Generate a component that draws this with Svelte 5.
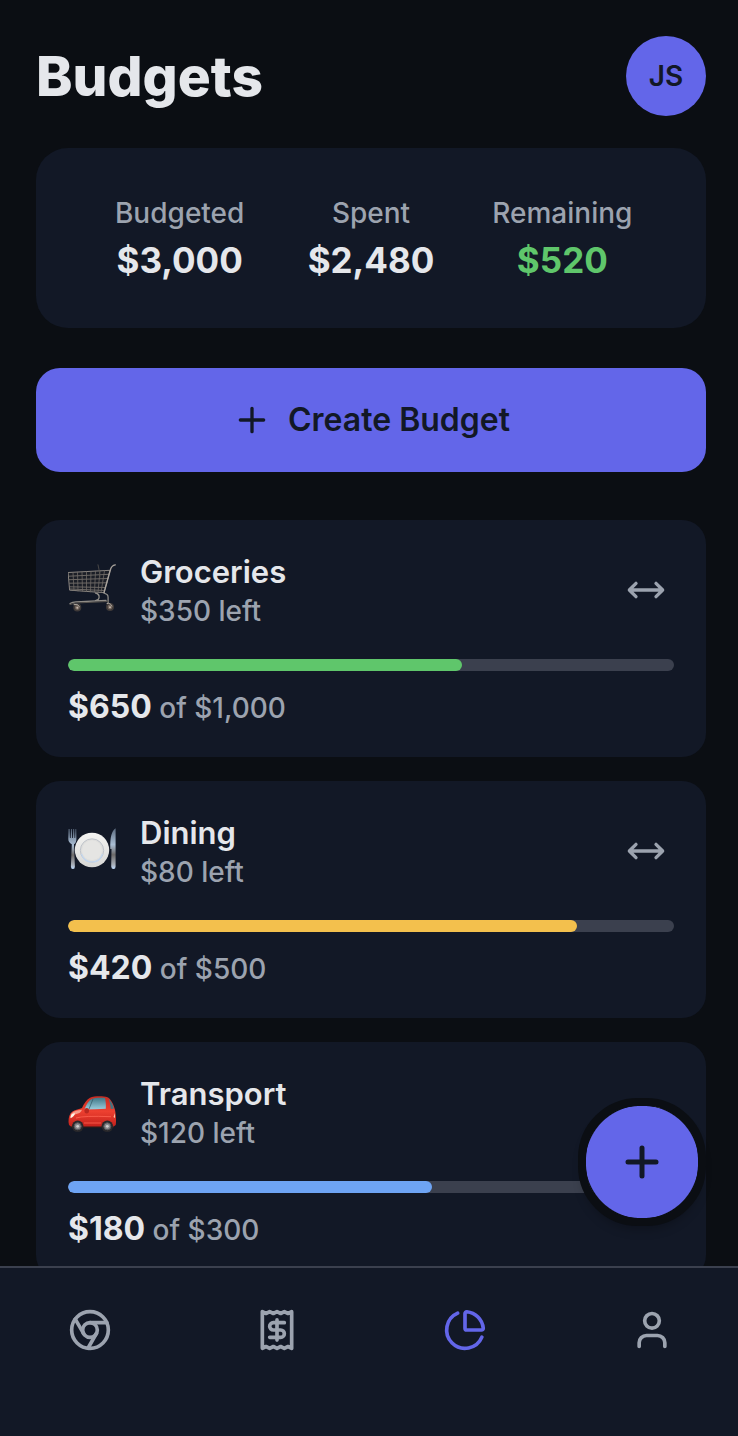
<script>
  const totals = [
    { label: 'Budgeted', value: '$3,000' },
    { label: 'Spent', value: '$2,480' },
    { label: 'Remaining', value: '$520', positive: true }
  ];

  const budgets = [
    { icon: 'cart', name: 'Groceries', left: '$350', spent: '$650', limit: '$1,000', percent: 65, tone: 'green' },
    { icon: 'plate', name: 'Dining', left: '$80', spent: '$420', limit: '$500', percent: 84, tone: 'amber' },
    { icon: 'car', name: 'Transport', left: '$120', spent: '$180', limit: '$300', percent: 60, tone: 'blue' }
  ];

  const tabs = ['Overview', 'Transactions', 'Budgets', 'Profile'];
  let active = $state('Budgets');
</script>

{#snippet plus()}
  <path d="M5 12h14M12 5v14" />
{/snippet}

{#snippet cart()}
  <svg class="picture" viewBox="0 0 48 48" fill="none" stroke-linecap="round" stroke-linejoin="round" aria-hidden="true">
    <path d="M2 39.5q2.5-1.5 6-1.7L38 36.5M27.5 29q4 1 3.6 4.500-.3 2.500-3.100 3M36 29l3 1.500q1.200 1 1.100 3v6" stroke="#8f8c87" stroke-width="1.3" />
    <path d="M2 40.5l6-1.500 32-1.500" stroke="#57534f" stroke-width="1" />
    <path d="M.5 8.500 42 6.300 36 28.700 2 26.200z" fill="#1b1e26" stroke="#8a8580" stroke-width="1" />
    <path d="M1 12.200 41 10.300M1.300 15.700 40 14.500M1.600 19.200 39 18.800M1.800 22.800 37.500 23.500M2 25 36.500 26.500" stroke="#817b75" stroke-width=".8" />
    <path d="M5 8.500 6 26.500M9.500 8.200 10 27M14 8 14.500 27M18.500 7.700 18.500 27.500M23 7.500 22.500 27.800M27.500 7.200 26.500 28M32 7 30 28.300M36.500 6.800 33 28.500" stroke="#6f6a66" stroke-width=".8" />
    <path d="M30 .8 31.300 7 32 13" stroke="#57534f" stroke-width=".8" />
    <path d="M36 28.700 42.500 5.500Q43.500 1.500 47.300.8" stroke="#aaa49d" stroke-width="1.300" />
    <circle cx="9.300" cy="43.500" r="3.200" fill="#73665e" stroke="#3f3a39" stroke-width="1.600" />
    <circle cx="42" cy="43" r="3.200" fill="#73665e" stroke="#3f3a39" stroke-width="1.600" />
    <path d="M6 40.500q3.500-1.500 5.500 2M39 39.500q3.500-1 5 2.500" stroke="#aaa49d" stroke-width="1" />
    <circle cx="9.300" cy="43.700" r="1" fill="#c4b7ac" />
    <circle cx="42" cy="43.200" r="1" fill="#c4b7ac" />
  </svg>
{/snippet}

{#snippet plate()}
  <svg class="picture" viewBox="0 0 48 48" fill="none" aria-hidden="true">
    <defs>
      <linearGradient id="steel" x1="0" y1="0" x2="0" y2="1">
        <stop offset="0" stop-color="#5d6c80" />
        <stop offset=".4" stop-color="#a9bdd3" />
        <stop offset=".65" stop-color="#6d6a69" />
        <stop offset=".9" stop-color="#aab1bb" />
        <stop offset="1" stop-color="#bfdcff" />
      </linearGradient>
      <linearGradient id="china" x1="0" y1="0" x2="0" y2="1">
        <stop offset="0" stop-color="#f4f4f2" />
        <stop offset="1" stop-color="#d8d8d6" />
      </linearGradient>
    </defs>
    <path d="M.6 4h1l.3 9h.8l.3-9h.8l.4 9h.8l.3-9h.8l.4 9h.7l.3-9h.7l.2 10q0 4-2.400 5.200l.9 22.300q0 2.500-2 2.500t-2-2.500l.9-22.300Q.3 17.500.3 14z" fill="url(#steel)" />
    <path d="M47.600 3.300v38.200q0 2.500-2.100 2.500t-2.300-2.500L43.500 24h-1.200q-.7-17 5.300-20.700z" fill="url(#steel)" />
    <circle cx="24" cy="25" r="17.200" fill="url(#china)" />
    <circle cx="24" cy="25.500" r="11.700" fill="#dededc" stroke="#b6bdc5" stroke-width=".8" />
    <path d="M13.500 29q2.500 8 10.500 8t10.500-8" stroke="#c2d6ee" stroke-width="1.200" />
    <circle cx="24" cy="25.300" r="10" fill="#e5e5e3" />
  </svg>
{/snippet}

{#snippet car()}
  <svg class="picture" viewBox="0 0 48 48" fill="none" aria-hidden="true">
    <defs>
      <linearGradient id="paint" x1="0" y1="0" x2="0" y2="1">
        <stop offset="0" stop-color="#c62c22" />
        <stop offset=".5" stop-color="#ed4030" />
        <stop offset="1" stop-color="#c3211c" />
      </linearGradient>
      <linearGradient id="glass" x1="0" y1="0" x2="0" y2="1">
        <stop offset="0" stop-color="#3f7786" />
        <stop offset="1" stop-color="#9bcddd" />
      </linearGradient>
    </defs>
    <path d="M2 36h44v6H2z" fill="#241a1c" />
    <path d="M.5 36c0-5 1-8.500 4-10.500 3-1.800 7-2.400 9.500-3.500 2-4.500 4.500-8.500 8-10.300 4-1.700 13-2 17.500-.4 3.500 1.300 6.500 8.200 7.500 12.700 1 5 1.300 12 .7 15l-2 1.500H3l-2-1.500z" fill="url(#paint)" />
    <path d="M16.500 23.500c1.600-4.500 4-8.500 7-10.500 3.500-1.400 10-1.700 13.500-.9.800 3.500 1.100 7.200.8 10.700-7 .3-14 .7-21.300.7z" fill="url(#glass)" />
    <path d="M25 13 21 23" stroke="#315965" stroke-width=".7" />
    <path d="M40.500 12.700c2.500 2.200 4.500 6 5.300 9.800l-3 .5c-.3-4-1-7.400-2.300-10.300z" fill="#417582" />
    <path d="M3 28q2-3 6-3.500l5-.8q-1 3.500-6.500 4.500-3 .6-5 2.800z" fill="#f79c8b" />
    <path d="M2.500 31q.5-3.400 4.500-3.700-.4 3.200-4.500 5z" fill="#fff5e8" />
    <path d="M47 27v5l-1.500-1z" fill="#ffc2a4" />
    <ellipse cx="18.700" cy="24.700" rx="2.300" ry="2.700" fill="#b92820" />
    <path d="M16 37h17M8 32q8-2.500 35-1.300" stroke="#ff6352" stroke-width=".8" />
    <circle cx="9.700" cy="40.300" r="5.800" fill="#29282b" />
    <circle cx="9.700" cy="40.300" r="3.500" fill="#89898c" stroke="#555559" />
    <circle cx="9.700" cy="40.300" r="1.400" fill="#d0d0d0" />
    <circle cx="39.300" cy="40.300" r="5.800" fill="#29282b" />
    <circle cx="39.300" cy="40.300" r="3.500" fill="#89898c" stroke="#555559" />
    <circle cx="39.300" cy="40.300" r="1.400" fill="#d0d0d0" />
  </svg>
{/snippet}

<div class="app">
  <div class="stage">
    <main>
      <header>
        <h1>Budgets</h1>
        <button class="avatar" aria-label="Account">JS</button>
      </header>

      <dl class="summary">
        {#each totals as t}
          <div>
            <dt>{t.label}</dt>
            <dd class:positive={t.positive}>{t.value}</dd>
          </div>
        {/each}
      </dl>

      <button class="create">
        <svg class="line" viewBox="0 0 24 24" aria-hidden="true">{@render plus()}</svg>
        Create Budget
      </button>

      <section aria-label="Budgets">
        {#each budgets as b}
          <article>
            <div class="top">
              {#if b.icon === 'cart'}{@render cart()}{:else if b.icon === 'plate'}{@render plate()}{:else}{@render car()}{/if}
              <div class="names">
                <h2>{b.name}</h2>
                <p>{b.left} left</p>
              </div>
              <button class="adjust" aria-label="Adjust {b.name}">
                <svg class="line" viewBox="0 0 24 24" aria-hidden="true">
                  <path d="m18 8 4 4-4 4M2 12h20M6 8l-4 4 4 4" />
                </svg>
              </button>
            </div>
            <div class="track" role="progressbar" aria-label={b.name} aria-valuenow={b.percent} aria-valuemin="0" aria-valuemax="100">
              <div class="fill {b.tone}" style:width="{b.percent}%"></div>
            </div>
            <p class="amount"><strong>{b.spent}</strong> of {b.limit}</p>
          </article>
        {/each}
      </section>
    </main>

    <button class="fab" aria-label="Add">
      <svg class="line" viewBox="0 0 24 24" aria-hidden="true">{@render plus()}</svg>
    </button>
  </div>

  <nav>
    {#each tabs as tab}
      <button class:active={active === tab} aria-label={tab} onclick={() => (active = tab)}>
        <svg class="line" viewBox="0 0 24 24" aria-hidden="true">
          {#if tab === 'Overview'}
            <circle cx="12" cy="12" r="10" />
            <circle cx="12" cy="12" r="4" />
            <path d="M21.170 8H12M3.950 6.060 8.540 14M10.880 21.940 15.460 14" />
          {:else if tab === 'Transactions'}
            <path d="M4 2v20l2-1 2 1 2-1 2 1 2-1 2 1 2-1 2 1V2l-2 1-2-1-2 1-2-1-2 1-2-1-2 1Z" />
            <path d="M16 8h-6a2 2 0 1 0 0 4h4a2 2 0 1 1 0 4H8M12 17.500v-11" />
          {:else if tab === 'Budgets'}
            <path d="M21 12c.552 0 1.005-.449.950-.998a10 10 0 0 0-8.953-8.951c-.550-.055-.998.398-.998.950v8a1 1 0 0 0 1 1z" />
            <path d="M21.210 15.890A10 10 0 1 1 8 2.830" />
          {:else}
            <path d="M19 21v-2a4 4 0 0 0-4-4H9a4 4 0 0 0-4 4v2" />
            <circle cx="12" cy="7" r="4" />
          {/if}
        </svg>
      </button>
    {/each}
  </nav>
</div>

<style>
  :global(body) {
    background: #0b0e13;
  }
  .app {
    display: flex;
    flex-direction: column;
    height: 100vh;
    background: #0b0e13;
    color: #e5e7eb;
    font-family: Inter, sans-serif;
    font-size: 28px;
  }
  .stage {
    position: relative;
    flex: 1;
    min-height: 0;
  }
  main {
    box-sizing: border-box;
    height: 100%;
    overflow-y: auto;
    scrollbar-width: none;
    padding: 36px 32px 32px 36px;
  }
  h1, h2, p, dl, dd {
    margin: 0;
  }
  button {
    font: inherit;
    color: inherit;
    border: 0;
    padding: 0;
    background: none;
    cursor: pointer;
    display: flex;
    align-items: center;
    justify-content: center;
  }
  .line {
    width: 40px;
    height: 40px;
    fill: none;
    stroke: currentColor;
    stroke-width: 2;
    stroke-linecap: round;
    stroke-linejoin: round;
  }
  header {
    display: flex;
    align-items: center;
    justify-content: space-between;
    margin-bottom: 32px;
  }
  h1 {
    font-size: 55px;
    line-height: 64px;
    font-weight: 800;
  }
  .avatar {
    width: 80px;
    height: 80px;
    border-radius: 50%;
    background: #6366e9;
    color: #121826;
    font-weight: 600;
  }
  .summary {
    display: grid;
    grid-template-columns: repeat(3, 1fr);
    padding: 48px 48px 46px;
    margin-bottom: 40px;
    border-radius: 32px;
    background: #121826;
    text-align: center;
  }
  dt {
    margin-bottom: 8px;
    line-height: 34px;
    font-weight: 500;
    color: #9ca3af;
  }
  dd {
    font-size: 35px;
    line-height: 44px;
    font-weight: 700;
  }
  .positive {
    color: #5fc66b;
  }
  .create {
    width: 100%;
    gap: 16px;
    padding: 32px;
    margin-bottom: 48px;
    border-radius: 24px;
    background: #6366e9;
    color: #121826;
    font-size: 32px;
    line-height: 40px;
    font-weight: 600;
  }
  section {
    display: grid;
    gap: 24px;
  }
  article {
    padding: 32px 32px 30px;
    border-radius: 24px;
    background: #121826;
  }
  .top {
    display: flex;
    align-items: flex-start;
    gap: 24px;
    margin-bottom: 29px;
  }
  .picture {
    width: 48px;
    height: 48px;
    margin-top: 12px;
  }
  .names {
    flex: 1;
    color: #9ca3af;
  }
  h2 {
    color: #e5e7eb;
    font-size: 31px;
    line-height: 40px;
    font-weight: 600;
  }
  p {
    line-height: 38px;
    font-weight: 500;
  }
  .adjust {
    padding: 8px;
    margin-top: 10px;
    color: #9ca3af;
  }
  .track {
    height: 12px;
    margin-bottom: 18px;
    border-radius: 6px;
    background: #3b404e;
    overflow: hidden;
  }
  .fill {
    height: 100%;
    border-radius: 6px;
  }
  .green {
    background: #5fc66b;
  }
  .amber {
    background: #f3c04d;
  }
  .blue {
    background: #6ea4f4;
  }
  .amount {
    color: #9ca3af;
  }
  strong {
    color: #e5e7eb;
    font-size: 32px;
    line-height: 32px;
    font-weight: 700;
  }
  .fab {
    position: absolute;
    right: 32px;
    bottom: 40px;
    width: 128px;
    height: 128px;
    box-sizing: border-box;
    border: 8px solid #0b0e13;
    border-radius: 60px;
    background: radial-gradient(circle closest-side, #6366e9 56px, #0b0e13 57px) padding-box #0b0e13;
    box-shadow: 0 8px 12px -6px rgb(0 0 0 / 30%);
    color: #121826;
  }
  .fab .line {
    width: 48px;
    height: 48px;
    stroke-width: 2.5;
  }
  nav {
    display: flex;
    justify-content: space-between;
    padding: 40px 64px 84px 68px;
    border-top: 2px solid #3b404e;
    background: #121826;
    color: #9ca3af;
  }
  nav .line {
    width: 44px;
    height: 44px;
  }
  nav .active {
    color: #6366e9;
  }
</style>
